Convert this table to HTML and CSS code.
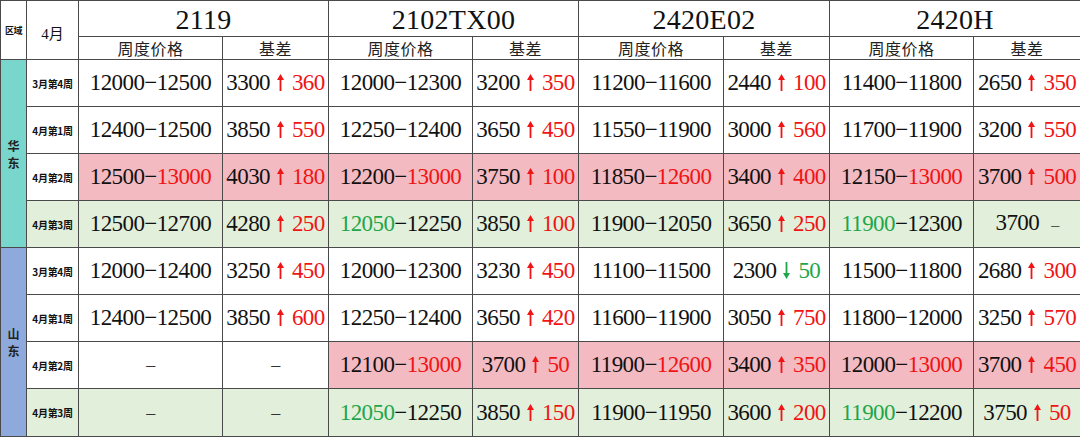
FILE: index.html
```html
<!DOCTYPE html>
<html lang="zh">
<head>
<meta charset="utf-8">
<title>基差周报</title>
<link rel="stylesheet" href="styles.css">
</head>
<body>
<table class="grid">
  <colgroup>
    <col class="w26"><col class="w52">
    <col class="w144"><col class="w106">
    <col class="w144"><col class="w106">
    <col class="w145"><col class="w106">
    <col class="w144"><col class="w107">
  </colgroup>
  <thead>
    <tr class="h1">
      <th rowspan="2" class="reg-h">区域</th>
      <th rowspan="2" class="wk-h">4月</th>
      <th colspan="2" class="code">2119</th>
      <th colspan="2" class="code">2102TX00</th>
      <th colspan="2" class="code">2420E02</th>
      <th colspan="2" class="code">2420H</th>
    </tr>
    <tr class="h2">
      <th class="sub">周度价格</th><th class="sub">基差</th>
      <th class="sub">周度价格</th><th class="sub">基差</th>
      <th class="sub">周度价格</th><th class="sub">基差</th>
      <th class="sub">周度价格</th><th class="sub">基差</th>
    </tr>
  </thead>
  <tbody>
    <tr>
      <td rowspan="4" class="reg east">华<br>东</td>
      <td class="wk">3月第4周</td>
      <td class="num">12000−12500</td>
      <td class="num">3300<svg class="up" viewBox="0 0 7 17"><path d="M3.5 0 L7 6 L4.4 6 L4.4 17 L2.6 17 L2.6 6 L0 6 Z"/></svg><span class="r">360</span></td>
      <td class="num">12000−12300</td>
      <td class="num">3200<svg class="up" viewBox="0 0 7 17"><path d="M3.5 0 L7 6 L4.4 6 L4.4 17 L2.6 17 L2.6 6 L0 6 Z"/></svg><span class="r">350</span></td>
      <td class="num">11200−11600</td>
      <td class="num">2440<svg class="up" viewBox="0 0 7 17"><path d="M3.5 0 L7 6 L4.4 6 L4.4 17 L2.6 17 L2.6 6 L0 6 Z"/></svg><span class="r">100</span></td>
      <td class="num">11400−11800</td>
      <td class="num">2650<svg class="up" viewBox="0 0 7 17"><path d="M3.5 0 L7 6 L4.4 6 L4.4 17 L2.6 17 L2.6 6 L0 6 Z"/></svg><span class="r">350</span></td>
    </tr>
    <tr>
      <td class="wk">4月第1周</td>
      <td class="num">12400−12500</td>
      <td class="num">3850<svg class="up" viewBox="0 0 7 17"><path d="M3.5 0 L7 6 L4.4 6 L4.4 17 L2.6 17 L2.6 6 L0 6 Z"/></svg><span class="r">550</span></td>
      <td class="num">12250−12400</td>
      <td class="num">3650<svg class="up" viewBox="0 0 7 17"><path d="M3.5 0 L7 6 L4.4 6 L4.4 17 L2.6 17 L2.6 6 L0 6 Z"/></svg><span class="r">450</span></td>
      <td class="num">11550−11900</td>
      <td class="num">3000<svg class="up" viewBox="0 0 7 17"><path d="M3.5 0 L7 6 L4.4 6 L4.4 17 L2.6 17 L2.6 6 L0 6 Z"/></svg><span class="r">560</span></td>
      <td class="num">11700−11900</td>
      <td class="num">3200<svg class="up" viewBox="0 0 7 17"><path d="M3.5 0 L7 6 L4.4 6 L4.4 17 L2.6 17 L2.6 6 L0 6 Z"/></svg><span class="r">550</span></td>
    </tr>
    <tr class="pink">
      <td class="wk">4月第2周</td>
      <td class="num">12500−<span class="r">13000</span></td>
      <td class="num">4030<svg class="up" viewBox="0 0 7 17"><path d="M3.5 0 L7 6 L4.4 6 L4.4 17 L2.6 17 L2.6 6 L0 6 Z"/></svg><span class="r">180</span></td>
      <td class="num">12200−<span class="r">13000</span></td>
      <td class="num">3750<svg class="up" viewBox="0 0 7 17"><path d="M3.5 0 L7 6 L4.4 6 L4.4 17 L2.6 17 L2.6 6 L0 6 Z"/></svg><span class="r">100</span></td>
      <td class="num">11850−<span class="r">12600</span></td>
      <td class="num">3400<svg class="up" viewBox="0 0 7 17"><path d="M3.5 0 L7 6 L4.4 6 L4.4 17 L2.6 17 L2.6 6 L0 6 Z"/></svg><span class="r">400</span></td>
      <td class="num">12150−<span class="r">13000</span></td>
      <td class="num">3700<svg class="up" viewBox="0 0 7 17"><path d="M3.5 0 L7 6 L4.4 6 L4.4 17 L2.6 17 L2.6 6 L0 6 Z"/></svg><span class="r">500</span></td>
    </tr>
    <tr class="mint">
      <td class="wk">4月第3周</td>
      <td class="num">12500−12700</td>
      <td class="num">4280<svg class="up" viewBox="0 0 7 17"><path d="M3.5 0 L7 6 L4.4 6 L4.4 17 L2.6 17 L2.6 6 L0 6 Z"/></svg><span class="r">250</span></td>
      <td class="num"><span class="g">12050</span>−12250</td>
      <td class="num">3850<svg class="up" viewBox="0 0 7 17"><path d="M3.5 0 L7 6 L4.4 6 L4.4 17 L2.6 17 L2.6 6 L0 6 Z"/></svg><span class="r">100</span></td>
      <td class="num">11900−12050</td>
      <td class="num">3650<svg class="up" viewBox="0 0 7 17"><path d="M3.5 0 L7 6 L4.4 6 L4.4 17 L2.6 17 L2.6 6 L0 6 Z"/></svg><span class="r">250</span></td>
      <td class="num"><span class="g">11900</span>−12300</td>
      <td class="num">3700<span class="flat">–</span></td>
    </tr>
    <tr>
      <td rowspan="4" class="reg shan">山<br>东</td>
      <td class="wk">3月第4周</td>
      <td class="num">12000−12400</td>
      <td class="num">3250<svg class="up" viewBox="0 0 7 17"><path d="M3.5 0 L7 6 L4.4 6 L4.4 17 L2.6 17 L2.6 6 L0 6 Z"/></svg><span class="r">450</span></td>
      <td class="num">12000−12300</td>
      <td class="num">3230<svg class="up" viewBox="0 0 7 17"><path d="M3.5 0 L7 6 L4.4 6 L4.4 17 L2.6 17 L2.6 6 L0 6 Z"/></svg><span class="r">450</span></td>
      <td class="num">11100−11500</td>
      <td class="num">2300<svg class="down" viewBox="0 0 7 17"><path d="M3.5 17 L7 11 L4.4 11 L4.4 0 L2.6 0 L2.6 11 L0 11 Z"/></svg><span class="g">50</span></td>
      <td class="num">11500−11800</td>
      <td class="num">2680<svg class="up" viewBox="0 0 7 17"><path d="M3.5 0 L7 6 L4.4 6 L4.4 17 L2.6 17 L2.6 6 L0 6 Z"/></svg><span class="r">300</span></td>
    </tr>
    <tr>
      <td class="wk">4月第1周</td>
      <td class="num">12400−12500</td>
      <td class="num">3850<svg class="up" viewBox="0 0 7 17"><path d="M3.5 0 L7 6 L4.4 6 L4.4 17 L2.6 17 L2.6 6 L0 6 Z"/></svg><span class="r">600</span></td>
      <td class="num">12250−12400</td>
      <td class="num">3650<svg class="up" viewBox="0 0 7 17"><path d="M3.5 0 L7 6 L4.4 6 L4.4 17 L2.6 17 L2.6 6 L0 6 Z"/></svg><span class="r">420</span></td>
      <td class="num">11600−11900</td>
      <td class="num">3050<svg class="up" viewBox="0 0 7 17"><path d="M3.5 0 L7 6 L4.4 6 L4.4 17 L2.6 17 L2.6 6 L0 6 Z"/></svg><span class="r">750</span></td>
      <td class="num">11800−12000</td>
      <td class="num">3250<svg class="up" viewBox="0 0 7 17"><path d="M3.5 0 L7 6 L4.4 6 L4.4 17 L2.6 17 L2.6 6 L0 6 Z"/></svg><span class="r">570</span></td>
    </tr>
    <tr>
      <td class="wk">4月第2周</td>
      <td class="num dash">–</td>
      <td class="num dash">–</td>
      <td class="num pinkc">12100−<span class="r">13000</span></td>
      <td class="num pinkc">3700<svg class="up" viewBox="0 0 7 17"><path d="M3.5 0 L7 6 L4.4 6 L4.4 17 L2.6 17 L2.6 6 L0 6 Z"/></svg><span class="r">50</span></td>
      <td class="num pinkc">11900−<span class="r">12600</span></td>
      <td class="num pinkc">3400<svg class="up" viewBox="0 0 7 17"><path d="M3.5 0 L7 6 L4.4 6 L4.4 17 L2.6 17 L2.6 6 L0 6 Z"/></svg><span class="r">350</span></td>
      <td class="num pinkc">12000−<span class="r">13000</span></td>
      <td class="num pinkc">3700<svg class="up" viewBox="0 0 7 17"><path d="M3.5 0 L7 6 L4.4 6 L4.4 17 L2.6 17 L2.6 6 L0 6 Z"/></svg><span class="r">450</span></td>
    </tr>
    <tr class="mint last">
      <td class="wk">4月第3周</td>
      <td class="num dash">–</td>
      <td class="num dash">–</td>
      <td class="num"><span class="g">12050</span>−12250</td>
      <td class="num">3850<svg class="up" viewBox="0 0 7 17"><path d="M3.5 0 L7 6 L4.4 6 L4.4 17 L2.6 17 L2.6 6 L0 6 Z"/></svg><span class="r">150</span></td>
      <td class="num">11900−11950</td>
      <td class="num">3600<svg class="up" viewBox="0 0 7 17"><path d="M3.5 0 L7 6 L4.4 6 L4.4 17 L2.6 17 L2.6 6 L0 6 Z"/></svg><span class="r">200</span></td>
      <td class="num"><span class="g">11900</span>−12200</td>
      <td class="num">3750<svg class="up" viewBox="0 0 7 17"><path d="M3.5 0 L7 6 L4.4 6 L4.4 17 L2.6 17 L2.6 6 L0 6 Z"/></svg><span class="r">50</span></td>
    </tr>
  </tbody>
</table>
</body>
</html>
```

FILE: styles.css
```css
html, body {
  margin: 0;
  padding: 0;
  background: #ffffff;
}

.grid {
  width: 1080px;
  border-collapse: collapse;
  table-layout: fixed;
  font-family: "Liberation Serif", "Noto Sans CJK SC", serif;
  color: #111;
}

.w26 { width: 26px; }
.w52 { width: 52px; }
.w144 { width: 144px; }
.w145 { width: 145px; }
.w106 { width: 106px; }
.w107 { width: 107px; }

.grid th,
.grid td {
  border: 1px solid #4a4a4a;
  padding: 0;
  text-align: center;
  vertical-align: middle;
  white-space: nowrap;
  overflow: hidden;
}

.grid th { font-weight: 400; }

.h1 { height: 36px; }
.h2 { height: 23px; }
.grid tbody tr { height: 47px; }
.grid tbody tr.last { height: 48px; }

.reg-h {
  font-family: "Noto Sans CJK SC", sans-serif;
  font-weight: 700 !important;
  font-size: 9px;
  letter-spacing: -0.5px;
}

.wk-h {
  font-family: "Liberation Serif", "Noto Sans CJK SC", serif;
  font-size: 15px;
  padding-top: 4px !important;
}

.code {
  font-size: 28px;
  line-height: 28px;
  padding-top: 3px !important;
  letter-spacing: 0.3px;
}

.sub {
  font-family: "Noto Sans CJK SC", sans-serif;
  font-size: 16px;
  line-height: 20px;
  letter-spacing: 0.5px;
  color: #222;
}

.reg {
  font-family: "Noto Sans CJK SC", sans-serif;
  font-weight: 700;
  font-size: 12px;
  line-height: 17px;
  color: #222;
}

.east { background: #79d6cc; }
.shan { background: #8eaadc; }

.wk {
  font-family: "Noto Sans CJK SC", sans-serif;
  font-weight: 700;
  font-size: 10px;
  letter-spacing: -0.3px;
  color: #111;
  background: #ffffff;
}

.num {
  font-size: 23px;
  line-height: 26px;
  letter-spacing: -0.6px;
}

.pink td { background: #f3bac2; }
.pink td.wk { background: #ffffff; }
.pinkc { background: #f3bac2; }

.mint td { background: #e2efda; }
.mint td.wk { background: #e2efda; }

.r { color: #f01414; }
.g { color: #1fa64a; }

.up,
.down {
  display: inline-block;
  width: 7px;
  height: 17px;
  vertical-align: -1px;
  margin: 0 8px 0 7px;
}

.up path { fill: #f01414; }
.down path { fill: #1fa64a; }

.dash {
  font-size: 18px;
  color: #333;
}

.flat {
  display: inline-block;
  margin-left: 12px;
  font-size: 16px;
  color: #555;
}
```
